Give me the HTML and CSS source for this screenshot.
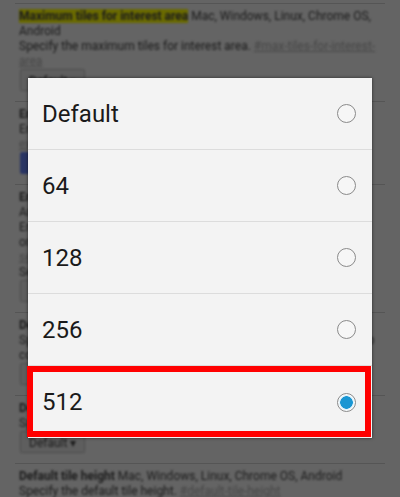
FILE: index.html
```html
<!DOCTYPE html>
<html lang="en">
<head>
    <meta charset="UTF-8">
    <meta name="viewport" content="width=device-width, initial-scale=1.0">
    <title>Flags</title>
    <link rel="stylesheet" href="styles.css">
</head>
<body>
    <!-- page behind the dialog, drawn already dimmed -->
    <div class="page">
        <div class="flag">
            <p><span class="flag-name hl">Maximum tiles for interest area</span> Mac, Windows, Linux, Chrome OS, Android</p>
            <p>Specify the maximum tiles for interest area. <a class="permalink">#max-tiles-for-interest-area</a></p>
            <div class="select">Default &#9662;</div>
        </div>
        <div class="flag">
            <p><span class="flag-name">Enable experimental canvas features</span> Mac, Windows, Linux</p>
            <p>Enables the use of experimental canvas features. <a class="permalink">#enable-experimental-canvas-features</a></p>
            <div class="select blue">Enable</div>
        </div>
        <div class="flag">
            <p><span class="flag-name">Enable embedded search API</span> Mac, Windows, Linux, Chrome OS, Android</p>
            <p>Enables the embedded search API for the new tab page and the omnibox when a search provider supports it. <a class="permalink">#enable-embedded-search-api</a></p>
            <p>Search results are shown in the page itself.</p>
            <div class="select">Default &#9662;</div>
        </div>
        <div class="flag">
            <p><span class="flag-name">Default tile width</span> Mac, Windows, Linux, Chrome OS, Android</p>
            <p>Specify the default tile width for the compositor when painting web content. <a class="permalink">#default-tile-width</a></p>
            <div class="select">Default &#9662;</div>
        </div>
        <div class="flag">
            <p><span class="flag-name">Default tile height</span> Mac, Windows, Linux</p>
            <p>Specify the default tile height. <a class="permalink">#default-tile-height</a></p>
            <div class="select">Default &#9662;</div>
        </div>
        <div class="flag">
            <p><span class="flag-name">Default tile height</span> Mac, Windows, Linux, Chrome OS, Android</p>
            <p>Specify the default tile height. <a class="permalink">#default-tile-height</a></p>
            <div class="select">Default &#9662;</div>
        </div>
    </div>

    <!-- choice dialog -->
    <div class="dialog">
        <div class="option"><span>Default</span><span class="radio"></span></div>
        <div class="option"><span>64</span><span class="radio"></span></div>
        <div class="option"><span>128</span><span class="radio"></span></div>
        <div class="option"><span>256</span><span class="radio"></span></div>
        <div class="option picked"><span>512</span><span class="radio on"></span></div>
    </div>
</body>
</html>
```

FILE: styles.css
```css
html {
    background-color: #646464;
}
body {
    margin: 0;
    background-color: #646464;
    font-family: Roboto, "Liberation Sans", sans-serif;
    overflow: hidden;
    height: 497px;
}
.page {
    padding: 3px 15px 0 15px;
    color: #1c1c1c;
    font-size: 12px;
}
.page p,
.page .select {
    filter: blur(1px);
}
.flag {
    border-top: 1px solid #555;
    padding: 5px 4px 10px 4px;
}
.flag p {
    margin: 0;
    line-height: 15px;
}
.flag-name {
    font-weight: bold;
}
.hl {
    background-color: #6a6a00;
}
.permalink {
    color: #474747;
    text-decoration: underline;
}
.select {
    display: inline-block;
    height: 22px;
    line-height: 22px;
    padding: 0 8px;
    margin-left: 1px;
    border: 1px solid #4e4e4e;
    border-radius: 2px;
    background-color: #5e5e5e;
    box-sizing: border-box;
}
.select.blue {
    background-color: #2a3563;
    color: #5e5e5e;
    border-color: #2a3563;
}
.dialog {
    position: absolute;
    left: 28px;
    top: 78px;
    width: 344px;
    background-color: #f3f3f3;
    box-shadow: 0 0 3px rgba(0, 0, 0, 0.6);
}
.option {
    position: relative;
    height: 71px;
    display: flex;
    align-items: center;
    justify-content: space-between;
    padding: 0 16px 0 14px;
    border-bottom: 1px solid #dcdcdc;
    font-size: 24px;
    color: #1a1a1a;
}
.option:last-child {
    height: 72px;
    border-bottom: none;
}
/* red frame marked on the chosen row */
.picked::after {
    content: "";
    position: absolute;
    left: -1px;
    top: 0;
    right: 1px;
    bottom: 1px;
    border: 6px solid #ff0000;
}
.radio {
    width: 19px;
    height: 19px;
    border: 1.3px solid #8a8a8a;
    border-radius: 50%;
    box-sizing: border-box;
    background-color: #f6f6f6;
}
.radio.on {
    background: radial-gradient(circle, #1996d3 0, #1996d3 6px, #d8eef8 6.5px, #ffffff 8.5px);
}
```
